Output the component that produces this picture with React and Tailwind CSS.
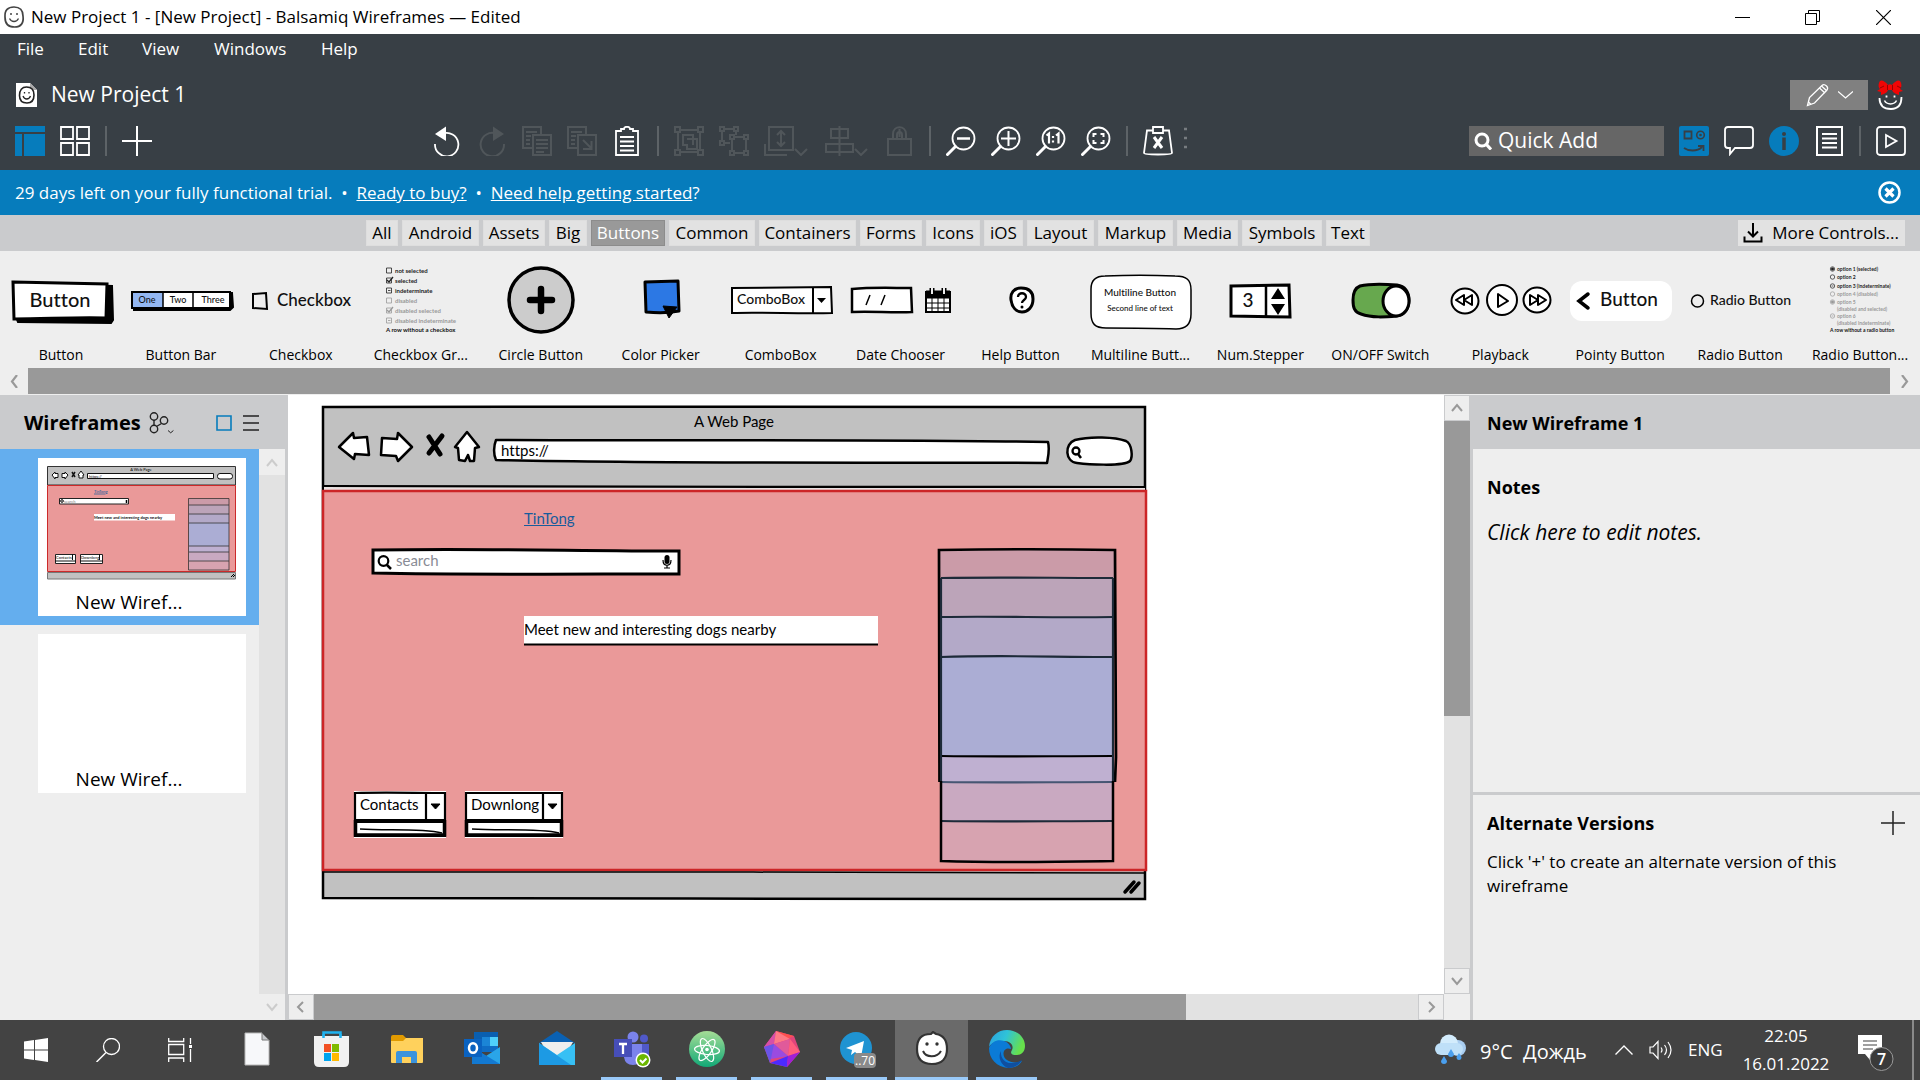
import React from "react";

const HAND = "font-['Lato',sans-serif] [font-variant-ligatures:none]";

/* ---------- helpers ---------- */

function Svg({ w = 30, h = 30, className = "", children }) {
  return (
    <svg width={w} height={h} viewBox={`0 0 ${w} ${h}`} fill="none" stroke="currentColor" strokeWidth="2" aria-hidden="true" className={`block shrink-0 ${className}`}>
      {children}
    </svg>
  );
}

function Tool({ label, dim, children }) {
  return (
    <button type="button" aria-label={label} className={dim ? "text-[#50565a]" : "text-white"}>
      {children}
    </button>
  );
}

const Sep = () => <span className="h-[30px] w-0.5 bg-[#5d6367]" />;

/* ---------- title, menu and project rows ---------- */

function TitleBar() {
  return (
    <header className="flex h-[34px] items-center bg-white pl-[3px] text-black">
      <Svg w={22} h={24} className="text-[#444]">
        <path d="M11 2C5 2 1.500 5 2 12c0 7 3 10 9.500 10S21 18 20 11C20 5 17 2 11 2z" strokeWidth="1.700" />
        <path d="M6.500 13.500c2 4 7 4 9 0" strokeWidth="1.300" />
        <path d="M8 8v2M14 8v2" strokeWidth="1.500" />
      </Svg>
      <h1 className="ml-1.5 text-[17px]">New Project 1 - [New Project] - Balsamiq Wireframes — Edited</h1>
      <div className="ml-auto flex">
        <button type="button" aria-label="Minimize" className="flex h-[34px] w-[69px] items-center justify-center">
          <Svg w={15} h={15}><path d="M0 7.500h15" strokeWidth="1" /></Svg>
        </button>
        <button type="button" aria-label="Restore" className="flex h-[34px] w-[70px] items-center justify-center">
          <Svg w={15} h={15}><path d="M.5 3.500h11v11H.5zM3.500 3.500v-3h11v11h-3" strokeWidth="1" /></Svg>
        </button>
        <button type="button" aria-label="Close" className="flex h-[34px] w-[73px] items-center justify-center">
          <Svg w={15} h={15}><path d="M0 0l15 15M15 0L0 15" strokeWidth="1.200" /></Svg>
        </button>
      </div>
    </header>
  );
}

const MENU = [
  ["File", "w-[61px]"],
  ["Edit", "w-16"],
  ["View", "w-[72px]"],
  ["Windows", "w-[107px]"],
  ["Help", "w-16"],
];

function Menu() {
  return (
    <nav className="flex h-[30px] items-center pl-[17px] text-[17px]">
      {MENU.map(([name, w]) => (
        <button key={name} type="button" className={`text-left leading-6 ${w}`}>{name}</button>
      ))}
    </nav>
  );
}

function ProjectRow() {
  return (
    <div className="flex h-[62px] items-center pr-[15px] pl-4">
      <Svg w={21} h={24}>
        <path d="M0 0h14l7 7v17H0z" fill="#fff" stroke="none" />
        <path d="M14 0v7h7" fill="#aaa" stroke="none" />
        <path d="M10.500 4C6 4 3.500 7 3.500 12.500S6 20 11 20s7-3 7-8-2.500-8-7.500-8z" fill="#fff" stroke="#222" strokeWidth="1.600" />
        <path d="M7 13c1.500 4 6 4 7.500 0M8.500 9v1.500M13 9v1.500" stroke="#222" strokeWidth="1.300" />
      </Svg>
      <h2 className="ml-3.5 text-[21px]">New Project 1</h2>
      <button type="button" aria-label="Edit mode" className="ml-auto flex h-[30px] w-[78px] items-center justify-center gap-2 bg-[#808080] text-white">
        <Svg w={24} h={24}>
          <path d="M1.500 22.500l2-8L16 2.500c1.500-1.500 3-1 4.500.5s1.500 3 0 4.500L8.500 20z" strokeWidth="1.300" />
          <path d="M13.500 5l5.500 5M15.500 3l5.500 5M2.500 19l2.500 2.500" strokeWidth="1.300" />
        </Svg>
        <Svg w={15} h={8}><path d="M0 .5l7.500 6.500L15 .5" strokeWidth="1.300" /></Svg>
      </button>
      <button type="button" aria-label="Account" className="ml-[9px]">
        <Svg w={28} h={30}>
          <path d="M2.500 18c0 7 4 11 11.500 11s10.500-5 10.500-12" stroke="#fff" strokeWidth="1.800" />
          <path d="M7.500 20.500c2 4.500 10 4.500 12 0" stroke="#fff" strokeWidth="1.500" />
          <path d="M9.500 15.500v2M17.500 15.500v2" stroke="#fff" strokeWidth="1.800" />
          <path d="M11 5C7 0 3-1 2 3c-1 3 0 5 1 6l-3 2 4 1v3c3-1 6-2 7-5h4c1 3 4 4 7 5v-3l4-1-3-2c1-1 2-3 1-6-1-4-5-3-9 2-1-1-3-1-4 0z" fill="#f00505" stroke="none" />
          <path d="M3 8l4-2M24 8l-4-2M10.500 5v5M15.500 5v5" stroke="#9b0000" strokeWidth="1" />
        </Svg>
      </button>
    </div>
  );
}

/* ---------- toolbar ---------- */

function Magnifier({ children }) {
  return (
    <Svg>
      <circle cx="17.500" cy="12.500" r="11" strokeWidth="1.800" />
      <path d="M9.500 20.500l-8 8" strokeWidth="3" strokeLinecap="round" />
      {children}
    </Svg>
  );
}

function CenterTools() {
  return (
    <div className="flex items-center gap-[15px]">
      <Tool label="Undo">
        <Svg>
          <path d="M3 18a11.700 11.700 0 1 0 8-10.500" strokeWidth="1.800" />
          <path d="M3 8L14 .5V15z" fill="currentColor" stroke="none" />
        </Svg>
      </Tool>
      <Tool label="Redo" dim>
        <Svg>
          <path d="M27 18a11.700 11.700 0 1 1-8-10.500" />
          <path d="M27 8L16 .5V15z" fill="currentColor" stroke="none" />
        </Svg>
      </Tool>
      <Tool label="Copy" dim>
        <Svg>
          <path d="M10 22H1V1h18v8M11 9h18v20H11zM4 6h5M4 10h5M4 14h4M4 18h4M9 6h6M14 14h12M14 18h12M14 22h12M14 26h8" />
        </Svg>
      </Tool>
      <Tool label="Duplicate" dim>
        <Svg>
          <path d="M10 22H1V1h18v8M11 9h18v20H11zM4 6h5M4 10h5M4 14h4M4 18h4M9 6h6M16 14l8 8M24.500 15v8H16" />
        </Svg>
      </Tool>
      <Tool label="Paste">
        <Svg>
          <path d="M9 5H4v24h22V5h-5V3h-3c0-3-6-3-6 0H9zM8 11h14M8 15.500h14M8 20h14M8 24.500h14" strokeWidth="1.800" />
        </Svg>
      </Tool>
      <Sep />
      <Tool label="Group" dim>
        <Svg>
          <path d="M1 1h5v5H1zM24 1h5v5h-5zM1 24h5v5H1zM24 24h5v5h-5zM6 4h18M6 26h18M4 6v18M26 6v18M9 9h10v4h4v10H13v-4H9zM13 13h6v6" />
        </Svg>
      </Tool>
      <Tool label="Ungroup" dim>
        <Svg>
          <path d="M1 1h4v4H1zM15 1h4v4h-4zM1 15h4v4H1zM11 9h4v4h-4zM25 9h4v4h-4zM11 25h4v4h-4zM25 25h4v4h-4zM5 3h10M3 5v10M17 5v4M5 17h6M15 11h10M13 13v12M27 13v12M15 27h10" />
        </Svg>
      </Tool>
      <Tool label="Layering" dim>
        <Svg w={45}>
          <path d="M5 1h24v23H5zM1 18v11h22M17 5v15M13 9l4-4 4 4M13 16l4 4 4-4M31 23l6 6 6-6" />
        </Svg>
      </Tool>
      <Tool label="Align" dim>
        <Svg w={45}>
          <path d="M7 3h17v9H7zM2 18h27v8H2zM15.500 0v30M31 23l6 6 6-6" />
        </Svg>
      </Tool>
      <Tool label="Lock" dim>
        <Svg>
          <path d="M4 13h23v16H4zM9 13V8c0-9 13-9 13 0v5M13 13V9c0-4 5-4 5 0v4M15.500 3v8" />
        </Svg>
      </Tool>
      <Sep />
      <Tool label="Zoom out"><Magnifier><path d="M11 12.500h13" strokeWidth="2.500" /></Magnifier></Tool>
      <Tool label="Zoom in"><Magnifier><path d="M10 12.500h15M17.500 5v15" /></Magnifier></Tool>
      <Tool label="Actual size"><Magnifier><path d="M10.500 9.500l2.500-2v10M20 9.500l2.500-2v10M17 10v2M17 14.500v2" strokeWidth="2.200" /></Magnifier></Tool>
      <Tool label="Zoom to fit"><Magnifier><path d="M15.500 8H12.500v3M19.500 8h3v3M15.500 17h-3v-3M19.500 17h3v-3" /></Magnifier></Tool>
      <Sep />
      <Tool label="Clear markup">
        <Svg>
          <path d="M10 4.500H4L1 27c0 2 28 2 28 0L26 4.500h-6M10 1h10v6H10z" strokeWidth="1.800" />
          <path d="M11 11l8 11M19 11l-8 11" strokeWidth="3" />
        </Svg>
      </Tool>
      <Svg w={4} h={30} className="-ml-1 text-[#777c80]">
        <path d="M0 3h3M0 12h3M0 21h3" strokeWidth="2.500" />
      </Svg>
    </div>
  );
}

function Toolbar() {
  return (
    <div className="flex h-[44px] items-start justify-between pr-3.5 pl-[15px]">
      <div className="flex grow items-center">
        <div className="flex w-[417px] items-center gap-[15px]">
          <Tool label="Navigator">
            <Svg>
              <path d="M0 0h30v6H0zM0 8h7v22H0zM9 8h21v22H9z" fill="#067cbc" stroke="none" />
            </Svg>
          </Tool>
          <Tool label="Grid">
            <Svg><path d="M1 1h12v12H1zM17 1h12v12H17zM1 17h12v12H1zM17 17h12v12H17z" strokeWidth="1.800" /></Svg>
          </Tool>
          <Sep />
          <Tool label="New wireframe"><Svg><path d="M15 0v30M0 15h30" /></Svg></Tool>
        </div>
        <CenterTools />
      </div>
      <div className="flex items-center gap-[15px]">
        <label className="flex h-[30px] w-[195px] items-center gap-1 bg-[#666] px-[5px]">
          <Svg w={18} h={18}>
            <circle cx="8" cy="8" r="6" strokeWidth="3" />
            <path d="M12.500 12.500l4.500 5" strokeWidth="3.200" />
          </Svg>
          <input aria-label="Quick Add" placeholder="Quick Add" className="ml-0.5 w-full min-w-0 bg-transparent text-[21px] text-white outline-none placeholder:text-white" />
        </label>
        <Tool label="UI Library">
          <Svg className="text-[#383f45]">
            <rect width="30" height="30" rx="2" fill="#067cbc" stroke="none" />
            <path d="M5.500 5.500h7v7h-7zM5 22c4 3 13 4 18-1M19 20h5.500v5" strokeWidth="1.800" />
            <circle cx="21.500" cy="9" r="3.800" strokeWidth="1.600" />
            <circle cx="21.500" cy="9" r="1.300" fill="currentColor" stroke="none" />
          </Svg>
        </Tool>
        <Tool label="Comments">
          <Svg><path d="M4 1h22q3 0 3 3v15q0 3-3 3H11l-5 6v-6H4q-3 0-3-3V4q0-3 3-3z" strokeWidth="1.800" /></Svg>
        </Tool>
        <Tool label="Info">
          <Svg className="text-[#383f45]">
            <circle cx="15" cy="15" r="15" fill="#067cbc" stroke="none" />
            <circle cx="15" cy="8" r="2" fill="currentColor" stroke="none" />
            <path d="M15 11.500V24" strokeWidth="3.500" />
          </Svg>
        </Tool>
        <Tool label="Notes">
          <Svg>
            <path d="M3 1h25v28H3z" />
            <path d="M8 8h15M8 12.500h15M8 17h15M8 21.500h15" strokeWidth="1.800" />
          </Svg>
        </Tool>
        <Sep />
        <Tool label="Full screen preview">
          <Svg>
            <rect x="1" y="1" width="28" height="28" rx="3" strokeWidth="1.800" />
            <path d="M10 9v12l10.500-6z" strokeWidth="1.800" />
          </Svg>
        </Tool>
      </div>
    </div>
  );
}

function TrialBar() {
  return (
    <div className="flex h-[45px] items-center bg-[#067cbc] pr-[19px] pl-[15px] text-[17px] text-white">
      <p className="whitespace-pre">
        29 days left on your fully functional trial.{"  •  "}
        <a href="#buy" className="underline">Ready to buy?</a>
        {"  •  "}
        <a href="#help" className="underline">Need help getting started</a>?
      </p>
      <button type="button" aria-label="Dismiss" className="ml-auto">
        <Svg w={23} h={23}>
          <circle cx="11.500" cy="11.500" r="10" strokeWidth="2.500" />
          <path d="M7.500 7.500l8 8M15.500 7.500l-8 8" strokeWidth="3.200" />
        </Svg>
      </button>
    </div>
  );
}

/* ---------- categories ---------- */

const CATEGORIES = [
  ["All", "w-8"],
  ["Android", "w-[77px]"],
  ["Assets", "w-[62px]"],
  ["Big", "w-[38px]"],
  ["Buttons", "w-[74px]"],
  ["Common", "w-[86px]"],
  ["Containers", "w-[97px]"],
  ["Forms", "w-[62px]"],
  ["Icons", "w-[54px]"],
  ["iOS", "w-[39px]"],
  ["Layout", "w-[67px]"],
  ["Markup", "w-[75px]"],
  ["Media", "w-[61px]"],
  ["Symbols", "w-[80px]"],
  ["Text", "w-[44px]"],
];

function Categories() {
  return (
    <nav className="flex h-9 items-center bg-[#cacbcd] pr-[15px] pl-[366px] text-[17px] text-black">
      <div className="flex gap-[4px]">
        {CATEGORIES.map(([name, w]) => (
          <button
            key={name}
            type="button"
            className={`flex h-[26px] items-center justify-center border whitespace-nowrap ${w} ${name === "Buttons" ? "border-[#8c8c8c] bg-[#999] text-white" : "border-[#dedede] bg-[#e2e2e2]"}`}
          >
            {name}
          </button>
        ))}
      </div>
      <button type="button" className="ml-auto flex h-[26px] w-[167px] items-center justify-between bg-[#e2e2e2] pr-1.5 pl-[5px] whitespace-nowrap">
        <Svg w={20} h={20}>
          <path d="M1.500 13.500v5h17v-5M10 0v13M5 8.500l5 5 5-5" />
        </Svg>
        More Controls...
      </button>
    </nav>
  );
}

/* ---------- control palette ---------- */

function Thumb({ children }) {
  return (
    <svg width="120" height="80" viewBox="0 0 120 80" fill="none" stroke="#000" aria-hidden="true" className={`block ${HAND}`}>
      {children}
    </svg>
  );
}

function T({ x, y, s, a = "start", c = "#111", w = 500, children }) {
  return (
    <text x={x} y={y} fontSize={s} textAnchor={a} fill={c} stroke="none" fontWeight={w}>{children}</text>
  );
}

const CHECK_ROWS = [
  ["not selected", "#222", 0],
  ["selected", "#222", 1],
  ["indeterminate", "#222", 2],
  ["disabled", "#999", 0],
  ["disabled selected", "#999", 1],
  ["disabled indeterminate", "#999", 2],
];

const RADIO_ROWS = [
  [16, "option 1 (selected)", "#222", 1],
  [24, "option 2", "#222", 0],
  [33, "option 3 (indeterminate)", "#222", 2],
  [41, "option 4 (disabled)", "#999", 0],
  [49, "option 5", "#999", 1],
  [56, "(disabled and selected)", "#999", -1],
  [63, "option 6", "#999", 2],
  [70, "(disabled indeterminate)", "#999", -1],
];

const PALETTE = [
  ["Button", (
    <Thumb>
      <path d="M16 28l95 3 1 34-2 3-93-1-2-5z" fill="#000" strokeWidth="2" />
      <path d="M12 27l94 2-1 34c-30-1-60 1-92 1z" fill="#fff" strokeWidth="3" />
      <T x={59} y={52} s={20} a="middle">Button</T>
    </Thumb>
  )],
  ["Button Bar", (
    <Thumb>
      <path d="M12 39l99-1 1 14-3 3H13z" fill="#000" strokeWidth="2" />
      <path d="M11 37h98v16H11z" fill="#fff" strokeWidth="2" />
      <path d="M12 38h30v14H12z" fill="#93b7f2" stroke="none" />
      <path d="M42 37v16M72 37v16" strokeWidth="1.500" />
      <T x={26} y={48} s={9} a="middle">One</T>
      <T x={57} y={48} s={9} a="middle">Two</T>
      <T x={92} y={48} s={9} a="middle">Three</T>
    </Thumb>
  )],
  ["Checkbox", (
    <Thumb>
      <path d="M12 39l13-1 1 16-14-1z" strokeWidth="2" />
      <T x={36} y={51} s={17}>Checkbox</T>
    </Thumb>
  )],
  ["Checkbox Gr...", (
    <Thumb>
      {CHECK_ROWS.map(([label, color, kind], i) => (
        <g key={label} stroke={color} strokeWidth="0.800">
          <path d={`M25.500 ${13 + i * 10}h5v5h-5z`} />
          {kind === 1 && <path d={`M26 ${15 + i * 10}l2 2 4-5`} strokeWidth="1.300" />}
          {kind === 2 && <path d={`M27 ${15.5 + i * 10}h2.500`} />}
          <T x={34} y={18 + i * 10} s={6} c={color} w={700}>{label}</T>
        </g>
      ))}
      <T x={25} y={77} s={6} w={700}>A row without a checkbox</T>
    </Thumb>
  )],
  ["Circle Button", (
    <Thumb>
      <circle cx="60" cy="45" r="32" fill="#ccc" strokeWidth="3.500" />
      <path d="M60 34v22M49 45h22" strokeWidth="6.500" strokeLinecap="round" />
    </Thumb>
  )],
  ["Color Picker", (
    <Thumb>
      <path d="M44 27l33-1 1 30c-10 2-22 2-33 1z" fill="#2c78e4" strokeWidth="3" strokeLinejoin="round" />
      <path d="M62 51l14 1-8 11z" fill="#000" />
    </Thumb>
  )],
  ["ComboBox", (
    <Thumb>
      <path d="M11 33l99-1 1 26c-30 1-70-1-100 0z" fill="#fff" strokeWidth="2" />
      <path d="M92 32v26" strokeWidth="2" />
      <path d="M96 43h9l-4.500 5z" fill="#000" stroke="none" />
      <T x={50} y={49} s={14} a="middle">ComboBox</T>
    </Thumb>
  )],
  ["Date Chooser", (
    <Thumb>
      <path d="M11 34c20-2 40-1 59-1l1 24c-20 1-40-1-60 0z" fill="#fff" strokeWidth="2.500" />
      <path d="M25 50l4-10M40 50l4-10" strokeWidth="1.500" />
      <path d="M85 37h24v20H85z" fill="#fff" strokeWidth="2" />
      <path d="M85 36h24v7H85z" fill="#000" />
      <path d="M85 48h24M85 53h24M91 42v15M97 42v15M103 42v15" strokeWidth="1" />
      <path d="M91 33v6M103 33v6" strokeWidth="5" />
      <path d="M91 33v6M103 33v6" stroke="#eee" strokeWidth="2" />
    </Thumb>
  )],
  ["Help Button", (
    <Thumb>
      <path d="M60 33c-7 0-11 5-10 12s5 12 11 12 11-5 11-13-5-11-12-11z" fill="#fff" strokeWidth="3" />
      <path d="M57 42c0-5 8-5 8 0 0 3-4 3-4 6" strokeWidth="2.300" />
      <circle cx="61" cy="52" r="1.500" fill="#000" stroke="none" />
    </Thumb>
  )],
  ["Multiline Butt...", (
    <Thumb>
      <path d="M25 21c25-1 45-1 70 0 12 0 16 4 16 14v24c0 11-6 15-15 15-25-1-45-1-70-1-11 0-15-4-15-15V34c0-9 5-13 14-13z" fill="#fff" strokeWidth="1.500" />
      <T x={60} y={41} s={10} a="middle">Multiline Button</T>
      <T x={60} y={56} s={8} a="middle">Second line of text</T>
    </Thumb>
  )],
  ["Num.Stepper", (
    <Thumb>
      <path d="M31 31l58-1 1 32-59-1z" fill="#fff" strokeWidth="3" />
      <path d="M66 30v32" strokeWidth="2.500" />
      <path d="M71 44l7-11 7 11zM71 49h14l-7 11z" fill="#000" stroke="none" />
      <T x={48} y={52} s={19} a="middle">3</T>
    </Thumb>
  )],
  ["ON/OFF Switch", (
    <Thumb>
      <path d="M40 31c12-3 25-2 37-1 8 1 12 7 12 15s-4 15-12 16c-12 1-25 2-36-2-7-2-8-7-8-14s2-12 7-14z" fill="#67a84e" strokeWidth="3" />
      <ellipse cx="76" cy="46" rx="13" ry="15" fill="#fff" strokeWidth="3" />
    </Thumb>
  )],
  ["Playback", (
    <Thumb>
      <ellipse cx="25" cy="46" rx="13.500" ry="12.500" fill="#fff" strokeWidth="2" />
      <ellipse cx="62" cy="45" rx="15" ry="15" fill="#fff" strokeWidth="2" />
      <ellipse cx="97" cy="45" rx="13.500" ry="12.500" fill="#fff" strokeWidth="2" />
      <path d="M24 40v10l-8-5zM32 40v10l-8-5zM58 39v13l10-6zM90 40v10l8-5zM98 40v10l8-5z" strokeWidth="2" strokeLinejoin="round" />
    </Thumb>
  )],
  ["Pointy Button", (
    <Thumb>
      <rect x="10" y="26" width="102" height="40" rx="12" fill="#fff" stroke="none" />
      <path d="M28 39l-9 7 9 7" strokeWidth="3.500" strokeLinecap="round" />
      <T x={40} y={51} s={19}>Button</T>
    </Thumb>
  )],
  ["Radio Button", (
    <Thumb>
      <circle cx="17.500" cy="46" r="6" strokeWidth="1.500" />
      <T x={30} y={50} s={14}>Radio Button</T>
    </Thumb>
  )],
  ["Radio Button...", (
    <Thumb>
      {RADIO_ROWS.map(([y, label, color, kind]) => (
        <g key={label} stroke={color} strokeWidth="0.700">
          {kind >= 0 && <circle cx="32.500" cy={y - 2} r="2.200" />}
          {kind === 1 && <circle cx="32.500" cy={y - 2} r="1.200" fill={color} />}
          {kind === 2 && <path d={`M31.500 ${y - 2}h2`} />}
          <T x={37} y={y} s={5} c={color} w={700}>{label}</T>
        </g>
      ))}
      <T x={30} y={77} s={5} w={700}>A row without a radio button</T>
    </Thumb>
  )],
];

function Palette() {
  return (
    <section aria-label="Controls" className="bg-[#eee] text-black">
      <div className="grid grid-cols-16 overflow-hidden pt-1 pl-px">
        {PALETTE.map(([name, art]) => (
          <button key={name} type="button" className="flex min-w-[120px] flex-col items-center">
            {art}
            <span className="pt-[11px] pb-[5px] text-sm leading-[17px] whitespace-nowrap">{name}</span>
          </button>
        ))}
      </div>
      <div className="flex h-[26px] items-center text-[#999]">
        <button type="button" aria-label="Scroll left" className="flex w-7 justify-center">
          <Svg w={8} h={13}><path d="M7 0L2 6.500 7 13" strokeWidth="2.200" /></Svg>
        </button>
        <div className="h-full grow bg-[#999]" />
        <button type="button" aria-label="Scroll right" className="flex w-[30px] justify-center">
          <Svg w={8} h={13}><path d="M1 0l5 6.500L1 13" strokeWidth="2.200" /></Svg>
        </button>
      </div>
    </section>
  );
}

/* ---------- navigator ---------- */

function PageThumb() {
  return (
    <svg width="190" height="114" viewBox="0 0 190 114" fill="none" aria-hidden="true" className={`block ${HAND}`}>
      <path d="M.5.500h188v18.500H.5z" fill="#c1c1c1" stroke="#333" />
      <g fill="#fff" stroke="#111">
        <path d="M5 9l3-3v1.500h3v4H8V13zM21 9l-3-3v1.500h-3v4h3V13zM31 9l3-4 3 4h-1v3h-4V9z" />
        <path d="M25 6l3 5M28 6l-3 5" strokeWidth="1.500" />
        <path d="M40.500 7.500h126v5h-126z" />
        <rect x="170.500" y="7.500" width="15" height="5.500" rx="2.500" />
      </g>
      <T x={94} y={5} s={4} a="middle">A Web Page</T>
      <T x={42} y={12} s={4}>https://</T>
      <path d="M.5 19.500h188v86H.5z" fill="#ea9999" stroke="#cc2a2a" />
      <path d="M.5 106.500h188v6.500H.5z" fill="#c1c1c1" stroke="#777" />
      <path d="M184 111l3-3M186 111l2-2" stroke="#000" />
      <T x={47} y={27} s={4} c="#175c9c">TinTong</T>
      <path d="M47 28h11.500" stroke="#175c9c" strokeWidth="0.700" />
      <path d="M12.500 32.500h69v5.500h-69z" fill="#fff" stroke="#222" />
      <circle cx="15" cy="35" r="1.300" stroke="#000" />
      <T x={17} y={37} s={4} c="#888">search</T>
      <path d="M79.500 34v3" stroke="#000" strokeWidth="1.500" />
      <path d="M47 48h81v6.500H47z" fill="#fff" />
      <T x={47} y={53} s={4} w={700}>Meet new and interesting dogs nearby</T>
      <path d="M8.500 88.500h20v9h-20zM33.500 88.500h22v9h-22z" fill="#fff" stroke="#222" />
      <path d="M8 95h21M33 95h23M25.500 88v6M52.500 88v6" stroke="#111" />
      <T x={9} y={93} s={4}>Contacts</T>
      <T x={34} y={93} s={4}>Downlong</T>
      <path d="M142 33h40v6h-40z" fill="#cb9ba8" />
      <path d="M142 39h40v9h-40z" fill="#bca4b9" />
      <path d="M142 48h40v9h-40z" fill="#b3a9c8" />
      <path d="M142 57h40v23h-40z" fill="#abadd4" />
      <path d="M142 80h40v6h-40z" fill="#bfb0d1" />
      <path d="M142 86h40v9h-40z" fill="#c9a9c1" />
      <path d="M142 95h40v9h-40z" fill="#d7a3b0" />
      <path d="M141.500 32.500h40.500v71.500h-40.500zM142 39h40M142 48h40M142 57h40M142 80h40M142 86h40M142 95h40" stroke="#333" strokeWidth="0.800" />
    </svg>
  );
}

function Navigator() {
  return (
    <aside className="flex w-[288px] shrink-0 flex-col border-r-[3px] border-[#cacbcd] bg-[#eee] text-black">
      <div className="-mr-[3px] flex h-[54px] items-center bg-[#cacbcd] pt-0.5 pr-[29px] pl-6">
        <h2 className="text-xl font-bold">Wireframes</h2>
        <button type="button" aria-label="View branches" className="ml-2">
          <Svg w={25} h={22} className="text-[#222]">
            <circle cx="5" cy="4.500" r="3.700" strokeWidth="1.400" />
            <circle cx="5" cy="17" r="3.700" strokeWidth="1.400" />
            <circle cx="15" cy="8.500" r="3.700" strokeWidth="1.400" />
            <path d="M5 8v5M7.500 14.500l5-3" strokeWidth="1.400" />
            <path d="M19 18.500l2.700 2.300 2.700-2.300" strokeWidth="1" />
          </Svg>
        </button>
        <button type="button" aria-label="Thumbnails" className="ml-auto text-[#067cbc]">
          <Svg w={16} h={16}><path d="M1 1h14v14H1z" strokeWidth="1.600" /></Svg>
        </button>
        <button type="button" aria-label="List" className="ml-[11px] text-[#222]">
          <Svg w={16} h={16}><path d="M0 1h16M0 8h16M0 15h16" strokeWidth="1.600" /></Svg>
        </button>
      </div>
      <div className="flex grow">
        <div className="flex grow flex-col">
          <button type="button" className="bg-[#64aeee] py-[9px] pr-[13px] pl-[38px]">
            <span className="flex h-[158px] flex-col items-center justify-between bg-white pt-2 pb-0.5">
              <PageThumb />
              <span className="-ml-[26px] text-[19px] leading-6">New Wiref...</span>
            </span>
          </button>
          <button type="button" className="py-[9px] pr-[13px] pl-[38px]">
            <span className="flex h-[159px] flex-col items-center justify-end bg-white pb-0.5">
              <span className="-ml-[26px] text-[19px] leading-6">New Wiref...</span>
            </span>
          </button>
        </div>
        <div className="flex w-[26px] flex-col justify-between bg-[#e2e2e2] text-[#ccc]">
          <button type="button" aria-label="Scroll up" className="flex h-[26px] items-center justify-center bg-[#eee]">
            <Svg w={12} h={9}><path d="M1 8l5-6 5 6" /></Svg>
          </button>
          <button type="button" aria-label="Scroll down" className="flex h-[26px] items-center justify-center bg-[#eee]">
            <Svg w={12} h={9}><path d="M1 1l5 6 5-6" /></Svg>
          </button>
        </div>
      </div>
    </aside>
  );
}

/* ---------- canvas ---------- */

/* Hand-drawn outlines of everything placed on the artboard. */
function Sketch() {
  return (
    <svg width="830" height="500" viewBox="320 403 830 500" fill="none" stroke="#000" aria-hidden="true" className="block">
      <path d="M323 407c200-1 600 0 822 0v492c-250-2-560 1-822-1z" fill="#c1c1c1" strokeWidth="2.500" />
      <path d="M324 487h821v4H324z" fill="#e8e0e0" stroke="none" />
      <path d="M323 486c250 2 560 0 823 1" strokeWidth="2.200" />
      <path d="M323 491h823v379H323z" fill="#ea9999" stroke="#cc2527" strokeWidth="2.500" />
      <path d="M324 872c200 1 600-1 822 1" strokeWidth="1.500" />
      <path d="M1125 892l9-10M1131 892l8-9" strokeWidth="3.500" strokeLinecap="round" />
      <g fill="#fff" strokeWidth="2.500" strokeLinejoin="round">
        <path d="M339 447l14-14 1 5 13-1 2 18-14-1-1 5z" />
        <path d="M412 447l-14-14-1 6-15-1-1 17 15 1 2 5z" />
        <path d="M467 432l12 15-4 1-1 13h-4l-2-6-3 6-6-1-1-12-3-1z" />
        <path d="M496 440c180 1 370-1 552 2 2 8 0 15-1 21-180-1-370 1-551-3-3-6-2-15 0-20z" />
        <path d="M1075 440c15-4 40-3 51 1 6 3 7 16 4 20-7 6-45 3-53 2-12-1-13-19-2-23z" />
      </g>
      <circle cx="1076" cy="451" r="3.500" strokeWidth="2.300" />
      <path d="M1078 454l3 4" strokeWidth="2.500" />
      <path d="M429 437l11 17M442 436l-13 17" strokeWidth="5" strokeLinecap="round" />

      <path d="M373 550c100-2 205 1 306 1v23c-100 0-206 1-306-1z" fill="#fff" strokeWidth="3" />
      <circle cx="383.500" cy="561" r="4.800" strokeWidth="2.200" />
      <path d="M387 565l4 4" strokeWidth="2.500" />
      <rect x="664.500" y="555" width="5" height="9" rx="2.500" fill="#000" stroke="none" />
      <path d="M663 560c0 7 8 7 8 0M667 565v3M664 568h6" strokeWidth="1.200" />

      <path d="M524 616h354v28H524z" fill="#fff" stroke="none" />
      <path d="M524 644.500h354" strokeWidth="2" />

      <path d="M354 791h92v47h-92zM465 791h98v47h-98z" fill="#fff" stroke="none" />
      <path d="M355 793c30-1 60 0 90 0v43h-90zM426 792v27M466 793h96v43h-96zM543 792v27" strokeWidth="2.200" />
      <path d="M354 821h92M465 821h98" strokeWidth="4" />
      <path d="M355.500 820v15h89v-15M466.500 820v15h95v-15" strokeWidth="3.500" />
      <path d="M360 829c25 2 60-1 82 4M472 829c25 2 66-1 87 4" strokeWidth="1.500" />
      <path d="M431 804h9l-4.500 5zM548 804h9l-4.500 5z" fill="#000" strokeWidth="1" />

      <g stroke="none">
        <path d="M940 550h175v28H940z" fill="#cb9ba8" />
        <path d="M940 578h174v39H940z" fill="#bca4b9" />
        <path d="M941 617h173v40H941z" fill="#b3a9c8" />
        <path d="M941 657h172v99H941z" fill="#abadd4" />
        <path d="M941 756h172v26H941z" fill="#bfb0d1" />
        <path d="M941 782h172v39H941z" fill="#c9a9c1" />
        <path d="M941 821h172v40H941z" fill="#d7a3b0" />
      </g>
      <path d="M941 578c60-1 110 0 172 0M941 617c60-1 110 1 172 0M941 657c60-2 110 0 172 0M941 821c60 1 110 0 172 0" stroke="#1d2a38" strokeWidth="2.200" />
      <path d="M941 782c60 1 110 0 172 0" stroke="#465673" strokeWidth="2.200" />
      <path d="M941 756c60 1 110 0 172 0" strokeWidth="2.200" />
      <path d="M939.500 782l-.5-232c60-1 120-1 176 0l1 207-1 25" strokeWidth="2.700" />
      <path d="M941 578v203M1113 578v203" stroke="#1d2a38" strokeWidth="2.200" />
      <path d="M941 781v80c60 2 110 1 172 0v-80" strokeWidth="2.500" />
    </svg>
  );
}

function Artboard() {
  return (
    <div className={`relative mt-2 ml-8 w-[830px] text-[15px] leading-5 text-black ${HAND}`}>
      <Sketch />
      <h3 className="absolute top-2 left-0 w-[828px] text-center">A Web Page</h3>
      <input aria-label="Address" defaultValue="https://" className="absolute top-[37px] left-[181px] w-[540px] bg-transparent outline-none" />
      <a href="#tintong" className="absolute top-[105px] left-[204px] text-[#175c9c] underline">TinTong</a>
      <input aria-label="Search" placeholder="search" className="absolute top-[147px] left-[76px] w-[260px] bg-transparent outline-none placeholder:text-[#888b95]" />
      <p className="absolute top-[216px] left-[204px]">Meet new and interesting dogs nearby</p>
      <select aria-label="Contacts" className="absolute top-[391px] left-10 w-[88px] appearance-none bg-transparent outline-none">
        <option>Contacts</option>
      </select>
      <select aria-label="Downlong" className="absolute top-[391px] left-[151px] w-[90px] appearance-none bg-transparent outline-none">
        <option>Downlong</option>
      </select>
    </div>
  );
}

function ScrollButton({ label, d, className }) {
  return (
    <button type="button" aria-label={label} className={`flex shrink-0 items-center justify-center border border-[#cacbcd] bg-[#eee] text-[#999] ${className}`}>
      <Svg w={12} h={12}><path d={d} /></Svg>
    </button>
  );
}

function Canvas() {
  return (
    <main className="flex min-w-0 grow bg-[#eee]">
      <div className="flex min-w-0 grow flex-col">
        <div className="grow overflow-hidden bg-white"><Artboard /></div>
        <div className="flex h-[26px]">
          <ScrollButton label="Scroll left" d="M8 1L3 6l5 5" className="w-[26px]" />
          <div className="flex grow bg-[#e2e2e2]">
            <div className="w-[79%] bg-[#999]" />
          </div>
          <ScrollButton label="Scroll right" d="M4 1l5 5-5 5" className="w-[26px]" />
        </div>
      </div>
      <div className="flex w-[26px] shrink-0 flex-col pb-[26px]">
        <ScrollButton label="Scroll up" d="M1 9l5-6 5 6" className="h-[26px]" />
        <div className="grow bg-[#e2e2e2]">
          <div className="h-[54%] bg-[#999]" />
        </div>
        <ScrollButton label="Scroll down" d="M1 3l5 6 5-6" className="h-[26px]" />
      </div>
    </main>
  );
}

/* ---------- inspector ---------- */

function Inspector() {
  return (
    <aside className="flex w-[450px] shrink-0 flex-col border-l-[3px] border-[#cacbcd] bg-[#eee] text-black">
      <h2 className="flex h-[54px] items-center bg-[#cacbcd] pt-0.5 pl-3.5 text-lg font-bold">New Wireframe 1</h2>
      <section className="h-[346px] border-b-[3px] border-[#cacbcd] pt-6 pl-3.5">
        <h3 className="text-lg leading-7 font-bold">Notes</h3>
        <p className="mt-[17px] text-[21px] leading-7 italic">Click here to edit notes.</p>
      </section>
      <section className="pt-3.5 pr-[15px] pl-3.5">
        <div className="flex items-center justify-between">
          <h3 className="text-lg leading-7 font-bold">Alternate Versions</h3>
          <button type="button" aria-label="Add alternate version" className="text-[#222]">
            <Svg w={24} h={24}><path d="M12 0v24M0 12h24" strokeWidth="1.500" /></Svg>
          </button>
        </div>
        <p className="mt-[13px] w-[370px] text-[17px] leading-6">Click '+' to create an alternate version of this wireframe</p>
      </section>
    </aside>
  );
}

/* ---------- taskbar ---------- */

const APPS = [
  ["File", 0, (
    <Svg w={36} h={36}>
      <path d="M6 2h17l7 7v25H6z" fill="#f7f8fa" stroke="#b8b8b8" strokeWidth="1" />
      <path d="M23 2v7h7z" fill="#c4c6ca" stroke="#777" strokeWidth="1" />
    </Svg>
  )],
  ["Microsoft Store", 0, (
    <Svg w={36} h={38}>
      <path d="M9.500 8V2.500h17V8" stroke="#1fb3f0" strokeWidth="2.500" />
      <path d="M0 6h35v26q0 5-5 5H5q-5 0-5-5z" fill="#f1f1f1" stroke="none" />
      <path d="M9.500 8V4M26.500 8V4" stroke="#1fb3f0" strokeWidth="2.500" />
      <g stroke="none">
        <path d="M10 14h7v8h-7z" fill="#f25022" />
        <path d="M18 14h7v8h-7z" fill="#7fba00" />
        <path d="M10 23h7v8h-7z" fill="#00a4ef" />
        <path d="M18 23h7v8h-7z" fill="#ffb900" />
      </g>
    </Svg>
  )],
  ["File Explorer", 0, (
    <Svg w={34} h={30}>
      <g stroke="none">
        <path d="M1 3q0-2 2-2h10l3 3v5H1z" fill="#e19a00" />
        <path d="M1 7h12l3-3h17v24q0 1-1 1H2q-1 0-1-1z" fill="#ffd15c" />
        <path d="M6 29V19q0-2 2-2h17q2 0 2 2v10h-6v-6h-9v6z" fill="#3b93dd" />
      </g>
    </Svg>
  )],
  ["Outlook", 0, (
    <Svg w={36} h={36}>
      <g stroke="none">
        <path d="M10 1h24v16H10z" fill="#0a5fb0" />
        <path d="M18 6h8v9h-8z" fill="#1b85d6" />
        <path d="M26 6h8v9h-8z" fill="#4fd0fb" />
        <path d="M10 15h24v6H10z" fill="#0f6cc4" />
        <path d="M8 16l14 9 14-9v17H8z" fill="#2aa5e8" />
        <path d="M8 16v17h28z" fill="#1379d1" />
        <path d="M0 8h18v18H0z" fill="#0a62c0" />
      </g>
      <ellipse cx="9" cy="17" rx="4" ry="4.800" stroke="#fff" strokeWidth="2.500" />
    </Svg>
  )],
  ["Mail", 0, (
    <Svg w={36} h={36}>
      <g stroke="none">
        <path d="M0 12L18 0l18 12z" fill="#0a61b3" />
        <path d="M2 11h32l-8 14H10z" fill="#eee" />
        <path d="M0 12l18 12 18-12v22H0z" fill="#37c0f4" />
        <path d="M0 12v22h32z" fill="#1d9ae4" />
      </g>
    </Svg>
  )],
  ["Teams", 1, (
    <Svg w={38} h={38}>
      <g stroke="none">
        <circle cx="20" cy="7" r="5.500" fill="#7b83eb" />
        <circle cx="31" cy="8.500" r="4" fill="#5059c9" />
        <path d="M26 14h10v14h-10z" fill="#5059c9" />
        <path d="M11 14h18v13q-1 8-9 8t-9-8z" fill="#7b83eb" />
        <path d="M1 9h18v18H1z" fill="#464eb8" />
        <circle cx="30" cy="30" r="7.500" fill="#fff" />
        <circle cx="30" cy="30" r="6" fill="#6bb700" />
      </g>
      <path d="M6 14h8M10 14v10" stroke="#fff" strokeWidth="2.300" />
      <path d="M27 30l2.500 2.500 4-4" stroke="#fff" strokeWidth="2" />
    </Svg>
  )],
  ["Atom", 1, (
    <Svg w={36} h={36}>
      <defs>
        <linearGradient id="atom" x1="0" y1="0" x2="0" y2="1">
          <stop offset="0" stopColor="#a5dd96" />
          <stop offset="1" stopColor="#12a977" />
        </linearGradient>
      </defs>
      <circle cx="18" cy="18" r="18" fill="url(#atom)" stroke="none" />
      <g stroke="#fff" strokeWidth="1.200">
        <ellipse cx="18" cy="19" rx="12.500" ry="4.500" transform="rotate(5 18 19)" />
        <ellipse cx="18" cy="19" rx="12.500" ry="4.500" transform="rotate(65 18 19)" />
        <ellipse cx="18" cy="19" rx="12.500" ry="4.500" transform="rotate(125 18 19)" />
        <circle cx="18" cy="18.500" r="1.200" fill="#fff" />
      </g>
    </Svg>
  )],
  ["Gem", 1, (
    <Svg w={36} h={36}>
      <g stroke="none">
        <path d="M12 0l18 5 6 16-13 15-17-4L0 16z" fill="#e0457b" />
        <path d="M12 0l18 5-7 3z" fill="#ff5050" />
        <path d="M12 0L0 16l10-3z" fill="#d64fa8" />
        <path d="M12 0l-2 13 16-5z" fill="#ff7a86" />
        <path d="M10 13l16-5 -2 17z" fill="#e05a9a" />
        <path d="M0 16l10-3 14 12-17 3z" fill="#9a4be0" />
        <path d="M0 16l6 16 4-19z" fill="#6a55e8" />
        <path d="M6 32l18-7-1 11z" fill="#4b2bff" />
        <path d="M26 8l10 13-12 4z" fill="#ff5e7d" />
        <path d="M24 25l12-4-13 15z" fill="#a01fd8" />
      </g>
    </Svg>
  )],
  ["Telegram", 1, (
    <Svg w={38} h={38}>
      <circle cx="18" cy="18" r="16" fill="#1f93d2" stroke="none" />
      <path d="M8 18l18-7-3 16-6-5-4 3 1-5z" fill="#fff" stroke="none" />
      <rect x="16" y="23" width="22" height="15" rx="4" fill="#8a8a8a" stroke="none" />
      <text x="27" y="35" fontSize="12" textAnchor="middle" fill="#fff" stroke="none">..70</text>
    </Svg>
  )],
  ["Balsamiq Wireframes", 2, (
    <Svg w={34} h={36}>
      <path d="M16 3C6 3 2 8 2 18s5 15 15 15 15-6 15-15S28 4 21 3l-3-2z" fill="#fff" stroke="#333" strokeWidth="2.200" />
      <path d="M8 20c3 7 14 7 18 0" stroke="#333" strokeWidth="2" />
      <circle cx="12" cy="13" r="1.700" fill="#333" stroke="none" />
      <circle cx="22" cy="13" r="1.700" fill="#333" stroke="none" />
    </Svg>
  )],
  ["Edge", 1, (
    <Svg w={36} h={38}>
      <defs>
        <linearGradient id="edge" x1="0" y1="0" x2="1" y2="0.300">
          <stop offset="0" stopColor="#2a9fe0" />
          <stop offset="0.500" stopColor="#2fc3d8" />
          <stop offset="1" stopColor="#67e04c" />
        </linearGradient>
      </defs>
      <g stroke="none">
        <path d="M0 17C1 6 9 0 18 0c11 0 18 8 18 16 0 6-4 9-8 9-6 0-7-2-5-5 2-4-1-9-8-9C7 11 2 13 0 17z" fill="url(#edge)" />
        <path d="M0 18C3 11 9 9 15 11c4 1 7 5 7 8-8-3-10 7-4 11 4 3 10 3 15 1-3 5-8 7-14 7C8 37 0 29 0 18z" fill="#0b7bd6" />
        <path d="M12 21c-1 8 6 17 21 9-3 5-8 8-14 8-6-2-11-10-7-17z" fill="#104f9f" />
      </g>
    </Svg>
  )],
];

function Taskbar() {
  return (
    <footer className="flex h-[60px] bg-[#434343] text-white">
      <button type="button" aria-label="Start" className="flex w-[72px] items-center justify-center">
        <Svg w={24} h={24}>
          <path d="M0 3.500l10-1.500v9.500H0zM11 2l13-2v11.500H11zM0 12.500h10V22L0 20.500zM11 12.500h13V24l-13-2z" fill="#fff" stroke="none" />
        </Svg>
      </button>
      <button type="button" aria-label="Search" className="flex w-[72px] items-center justify-center">
        <Svg w={24} h={24}>
          <circle cx="15.500" cy="8.500" r="8" strokeWidth="1.300" />
          <path d="M10 14.500L.5 24" strokeWidth="1.500" />
        </Svg>
      </button>
      <button type="button" aria-label="Task view" className="flex w-[72px] items-center justify-center">
        <Svg w={24} h={24}>
          <path d="M.7 0v3.500h15V0M.7 6.500h15v10h-15zM.7 24v-4h15v4M22.500 0v6M22.500 11v13" strokeWidth="1.300" />
          <path d="M21 7h3v3h-3z" fill="#fff" stroke="none" />
        </Svg>
      </button>
      <div className="ml-[3px] flex">
        {APPS.map(([name, state, icon]) => (
          <button key={name} type="button" aria-label={name} className={`flex w-[75px] flex-col items-center ${state === 2 ? "border-x border-[#434343] bg-[#6a6a6a]" : ""}`}>
            <span className="flex grow items-center">{icon}</span>
            <span className={`h-[3px] ${state === 0 ? "w-0" : state === 1 ? "w-[61px] bg-[#99c9f8]" : "w-full bg-[#99c9f8]"}`} />
          </button>
        ))}
      </div>
      <div className="ml-auto flex items-center">
        <Svg w={34} h={32}>
          <g stroke="none">
            <circle cx="24" cy="14" r="8" fill="#a9cdf0" />
            <circle cx="15" cy="9.500" r="9" fill="#d3ecfc" />
            <rect x="1" y="9" width="28" height="12" rx="6" fill="#bfe0f8" />
            <path d="M10 22l3 5q0 3-3 3t-3-3zM17 15l3 5q0 3-3 3t-3-3zM25 19l2.500 4q0 3-2.500 3t-2.500-3z" fill="#4a9fee" />
          </g>
        </Svg>
        <button type="button" className="ml-3 w-[135px] pt-1 text-left text-xl whitespace-pre">9°C  Дождь</button>
        <button type="button" aria-label="Show hidden icons">
          <Svg w={18} h={10}><path d="M.5 9.500L9 1l8.500 8.500" strokeWidth="1.400" /></Svg>
        </button>
        <button type="button" aria-label="Volume" className="ml-4">
          <Svg w={23} h={20}>
            <path d="M1 7h3l5-5.500v17L4 13H1z" strokeWidth="1.200" />
            <path d="M12 7.500q2 2.500 0 5M15.500 5q4 5 0 10M19 2q6 8 0 16" strokeWidth="1.200" />
          </Svg>
        </button>
        <button type="button" className="ml-4 w-[53px] text-left text-[17px]">ENG</button>
        <button type="button" className="w-[90px] text-center text-[17px] leading-7 whitespace-pre-line">{"22:05\n16.01.2022"}</button>
        <button type="button" aria-label="7 notifications" className="ml-[27px] pt-2">
          <Svg w={36} h={38}>
            <path d="M0 0h24v19H13l-1 6-5-6H0z" fill="#fff" stroke="none" />
            <path d="M5 6h14M5 10h14M5 14h10" stroke="#434343" strokeWidth="1.200" />
            <circle cx="23.500" cy="24" r="11.500" fill="#3a3a3a" stroke="#999" strokeWidth="1" />
            <text x="23.500" y="30" fontSize="16" fontWeight="600" textAnchor="middle" fill="#fff" stroke="none">7</text>
          </Svg>
        </button>
        <span className="mr-1.5 ml-[18px] h-[60px] w-0.5 bg-[#8a8a8a]" />
      </div>
    </footer>
  );
}

export default function App() {
  return (
    <div className="flex min-h-screen flex-col bg-[#eee] font-['Open_Sans',sans-serif]">
      <TitleBar />
      <div className="bg-[#383f45] text-white">
        <Menu />
        <ProjectRow />
        <Toolbar />
      </div>
      <TrialBar />
      <Categories />
      <Palette />
      <div className="mt-px flex grow">
        <Navigator />
        <Canvas />
        <Inspector />
      </div>
      <Taskbar />
    </div>
  );
}
